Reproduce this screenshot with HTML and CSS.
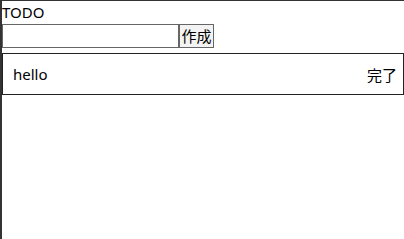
FILE: index.html
```html
<!DOCTYPE html>
<html lang="ja">
<head>
    <meta charset="UTF-8">
    <meta name="viewport" content="width=device-width, initial-scale=1.0">
    <title>TODO</title>
    <link rel="stylesheet" href="styles.css">
</head>
<body>
    <div class="title">TODO</div>

    <!-- Create Form -->
    <form class="todo-form" onsubmit="return false;">
        <input type="text" class="todo-input">
        <button type="submit" class="create-btn">作成</button>
    </form>

    <!-- Todo List -->
    <ul class="todo-list">
        <li class="todo-item">
            <span class="todo-text">hello</span>
            <button class="done-btn">完了</button>
        </li>
    </ul>
</body>
</html>
```

FILE: styles.css
```css
/* General Styling */
html, body {
    height: 100%;
}

body {
    margin: 0;
    padding: 0;
    border-left: 2px solid #333;
    border-top: 1px solid #333;
    box-sizing: border-box;
    font-family: "Noto Sans", "Noto Sans CJK JP", sans-serif;
    font-size: 15px;
    color: #000;
    background: #fff;
}

.title {
    height: 23px;
    line-height: 23px;
}

/* Form Styling */
.todo-form {
    display: flex;
    margin: 0;
}

.todo-input {
    width: 177px;
    height: 24px;
    box-sizing: border-box;
    border: 1px solid #666;
    margin: 0;
    padding: 0 2px;
    font-size: 15px;
}

.create-btn {
    width: 35px;
    height: 24px;
    box-sizing: border-box;
    border: 1px solid #666;
    background: #f3f3f3;
    margin: 0;
    padding: 0;
    font-family: "Noto Sans CJK JP", sans-serif;
    font-size: 15px;
    line-height: 20px;
}

/* List Styling */
.todo-list {
    list-style: none;
    margin: 5px 0 0;
    padding: 0;
}

.todo-item {
    display: flex;
    justify-content: space-between;
    align-items: center;
    height: 42px;
    box-sizing: border-box;
    border: 1px solid #222;
    padding: 0 6px 0 10px;
}

.done-btn {
    border: none;
    background: none;
    padding: 0;
    font-family: "Noto Sans CJK JP", sans-serif;
    font-size: 15px;
    color: #000;
}
```
